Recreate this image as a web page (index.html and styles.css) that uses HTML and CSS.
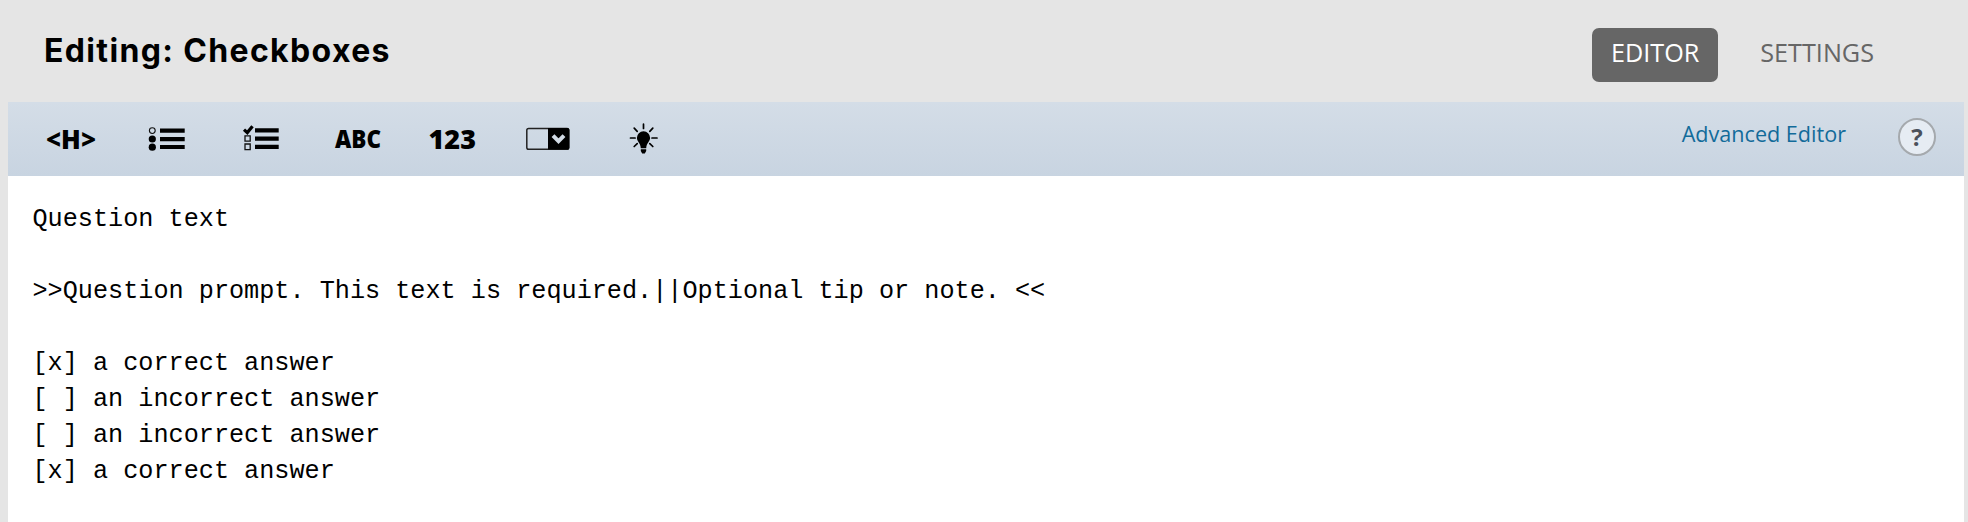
FILE: index.html
```
<!DOCTYPE html>
<html lang="en">
<head>
<meta charset="utf-8">
<title>Editing: Checkboxes</title>
<link rel="stylesheet" href="styles.css">
</head>
<body>
<header class="header">
  <h1 class="title">Editing: Checkboxes</h1>
  <nav class="modes">
    <a class="mode mode-active">EDITOR</a>
    <a class="mode">SETTINGS</a>
  </nav>
</header>
<main class="editor">
  <div class="toolbar">
    <div class="tools">
      <svg class="tool" viewBox="24 102 95 74"><text class="glyph" x="46" y="148.6" font-size="27" textLength="50" lengthAdjust="spacingAndGlyphs">&lt;H&gt;</text></svg>
      <svg class="tool" viewBox="119 102 95 74">
        <circle cx="152.3" cy="130.6" r="2.9" fill="none" stroke="#111" stroke-width="1.1"/>
        <circle cx="152.3" cy="139" r="3.6"/><circle cx="152.3" cy="147.2" r="3.6"/>
        <path d="M160 128.5h24.7v4.2H160zM160 137h24.7v4.2H160zM160 144.9h24.7v4.2H160z"/>
      </svg>
      <svg class="tool" viewBox="214 102 95 74">
        <path d="M244 129.6l3.3 3 5.2-6.4" fill="none" stroke="#000" stroke-width="3.2"/>
        <path d="M245 135.8h5.2v5.4H245zM245 144h5.2v5.7H245z" fill="none" stroke="#111" stroke-width="1.3"/>
        <path d="M255 128.3h23.7v4.2H255zM255 136.6h23.7v4.2H255zM255 144.7h23.7v4.2H255z"/>
      </svg>
      <svg class="tool" viewBox="309 102 95 74"><text class="glyph" x="335" y="147.6" font-size="25.3" textLength="46" lengthAdjust="spacingAndGlyphs">ABC</text></svg>
      <svg class="tool" viewBox="404 102 95 74"><text class="glyph" x="428.5" y="148.6" font-size="27" textLength="47.5" lengthAdjust="spacingAndGlyphs">123</text></svg>
      <svg class="tool" viewBox="499 102 95 74">
        <rect x="526.8" y="128.4" width="42" height="20.9" rx="1.8" fill="none" stroke="#222" stroke-width="1.5"/>
        <path d="M548 128h19.5q1.8 0 1.8 1.8v18q0 1.8-1.8 1.8H548z"/>
        <path d="M553 135.7l5.5 5.5 5.5-5.5" fill="none" stroke="#d2dbe5" stroke-width="4"/>
      </svg>
      <svg class="tool" viewBox="594 102 95 74">
        <path d="M643.5 131.2a6.6 6.6 0 0 1 6.6 6.6c0 3.8-3.6 5.1-3.9 10.4h-5.4c-.3-5.3-3.9-6.6-3.9-10.4a6.6 6.6 0 0 1 6.6-6.6zM640.8 149.3h5.4v1.8l-1.4 2.4h-2.6l-1.4-2.4z"/>
        <path d="M643.5 124.2v4.3M630.5 138h4.6M652 138h5M634.2 128.2l3 3.1M652.8 128.2l-3 3.1M634.2 146.5l3-2.8M652.8 146.5l-3-2.8" fill="none" stroke="#000" stroke-width="1.7" stroke-linecap="round"/>
      </svg>
    </div>
    <a class="advanced">Advanced Editor</a>
    <button class="help">?</button>
  </div>
  <pre class="source">Question text

&gt;&gt;Question prompt. This text is required.||Optional tip or note. &lt;&lt;

[x] a correct answer
[ ] an incorrect answer
[ ] an incorrect answer
[x] a correct answer</pre>
</main>
</body>
</html>
```

FILE: styles.css
```
* { box-sizing: border-box; }
body {
  margin: 0;
  height: 522px;
  display: flex;
  flex-direction: column;
  overflow: hidden;
  background: #e5e5e5;
  font-family: "Open Sans", sans-serif;
}
.header {
  height: 102px;
  display: flex;
  justify-content: space-between;
  align-items: flex-start;
  padding: 28px 76px 0 44px;
}
.title {
  margin: 2px 0 0;
  font: 700 32px/42px Inter, sans-serif;
  letter-spacing: 1.35px;
  color: #000;
}
.modes { display: flex; gap: 24px; }
.mode {
  height: 54px;
  padding: 0 18px;
  border-radius: 7px;
  font-size: 25.2px;
  line-height: 49px;
  color: #666;
}
.mode-active { padding: 0 19px; background: #666; color: #fff; }
.editor {
  flex: 1;
  margin: 0 4px 0 8px;
  background: #fff;
}
.toolbar {
  height: 74px;
  display: flex;
  align-items: flex-start;
  padding: 0 28px 0 16px;
  background: linear-gradient(#d4dde7, #c8d4e1);
}
.tools { display: flex; margin-right: auto; }
.tool { width: 95px; height: 74px; fill: #000; }
.glyph { font-family: "Open Sans", sans-serif; font-weight: 800; }
.advanced {
  margin: 16px 52px 0 0;
  font-size: 21.6px;
  line-height: 32px;
  color: #126b9a;
}
.help {
  width: 38px;
  height: 38px;
  margin: 16px 0 0;
  padding: 0;
  border: 2px solid #a5a9ad;
  border-radius: 50%;
  background: #e6ecf3;
  color: #4b515b;
  font: 700 24px/34px "Open Sans", sans-serif;
}
.source {
  margin: 0;
  padding: 26px 24.5px;
  font: 25.2px/36px "Liberation Mono", monospace;
  color: #000;
}
```
